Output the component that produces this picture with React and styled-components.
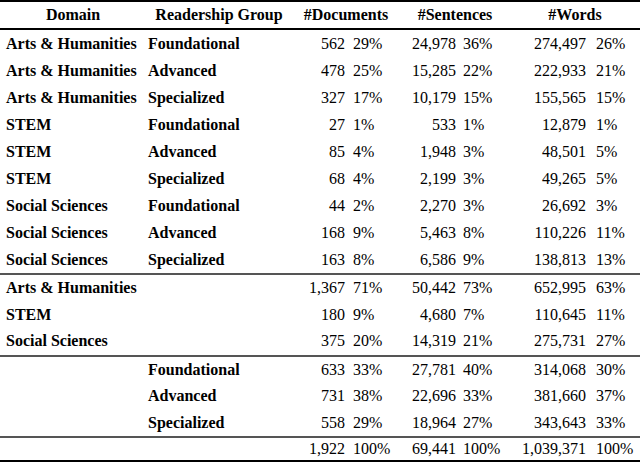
import React from "react";
import styled, { createGlobalStyle } from "styled-components";

const GlobalStyle = createGlobalStyle`
  html, body {
    margin: 0;
    padding: 0;
    background: #fff;
  }
  body {
    font-family: "Liberation Serif", "Times New Roman", serif;
    color: #000;
  }
`;

const Table = styled.div`
  width: 640px;
  border-top: 2px solid #000;
  border-bottom: 2px solid #000;
  font-size: 16px;
`;

const Group = styled.div`
  border-bottom: ${(p) => (p.$thick ? "2px solid #000" : p.$last ? "none" : "2px solid #555")};
`;

const Row = styled.div`
  display: grid;
  grid-template-columns: 146px 146px 55px 53px 58px 52px 80px 50px;
  height: ${(p) => p.$h}px;
  align-items: center;
  white-space: nowrap;
`;

const Head = styled.div`
  grid-column: span ${(p) => p.$span || 1};
  text-align: center;
  font-weight: bold;
`;

const Label = styled.div`
  font-weight: bold;
  padding-left: ${(p) => p.$pad}px;
`;

const Num = styled.div`
  text-align: right;
  padding-right: ${(p) => p.$pad}px;
`;

const Pct = styled.div`
  text-align: left;
  padding-left: ${(p) => p.$pad}px;
`;

const groups = [
  [
    ["Arts & Humanities", "Foundational", "562", "29%", "24,978", "36%", "274,497", "26%"],
    ["Arts & Humanities", "Advanced", "478", "25%", "15,285", "22%", "222,933", "21%"],
    ["Arts & Humanities", "Specialized", "327", "17%", "10,179", "15%", "155,565", "15%"],
    ["STEM", "Foundational", "27", "1%", "533", "1%", "12,879", "1%"],
    ["STEM", "Advanced", "85", "4%", "1,948", "3%", "48,501", "5%"],
    ["STEM", "Specialized", "68", "4%", "2,199", "3%", "49,265", "5%"],
    ["Social Sciences", "Foundational", "44", "2%", "2,270", "3%", "26,692", "3%"],
    ["Social Sciences", "Advanced", "168", "9%", "5,463", "8%", "110,226", "11%"],
    ["Social Sciences", "Specialized", "163", "8%", "6,586", "9%", "138,813", "13%"],
  ],
  [
    ["Arts & Humanities", "", "1,367", "71%", "50,442", "73%", "652,995", "63%"],
    ["STEM", "", "180", "9%", "4,680", "7%", "110,645", "11%"],
    ["Social Sciences", "", "375", "20%", "14,319", "21%", "275,731", "27%"],
  ],
  [
    ["", "Foundational", "633", "33%", "27,781", "40%", "314,068", "30%"],
    ["", "Advanced", "731", "38%", "22,696", "33%", "381,660", "37%"],
    ["", "Specialized", "558", "29%", "18,964", "27%", "343,643", "33%"],
  ],
  [["", "", "1,922", "100%", "69,441", "100%", "1,039,371", "100%"]],
];

const rowHeights = [27, 26.5, 26.5, 22];

const DataRow = ({ cells, h }) => (
  <Row $h={h}>
    <Label $pad={6}>{cells[0]}</Label>
    <Label $pad={2}>{cells[1]}</Label>
    <Num $pad={2}>{cells[2]}</Num>
    <Pct $pad={6}>{cells[3]}</Pct>
    <Num $pad={2}>{cells[4]}</Num>
    <Pct $pad={5}>{cells[5]}</Pct>
    <Num $pad={4}>{cells[6]}</Num>
    <Pct $pad={6}>{cells[7]}</Pct>
  </Row>
);

const App = () => (
  <>
    <GlobalStyle />
    <Table>
      <Group $thick>
        <Row $h={26}>
          <Head>Domain</Head>
          <Head>Readership Group</Head>
          <Head $span={2}>#Documents</Head>
          <Head $span={2}>#Sentences</Head>
          <Head $span={2}>#Words</Head>
        </Row>
      </Group>
      {groups.map((rows, gi) => (
        <Group key={gi} $last={gi === groups.length - 1}>
          {rows.map((cells, ri) => (
            <DataRow key={ri} cells={cells} h={rowHeights[gi]} />
          ))}
        </Group>
      ))}
    </Table>
  </>
);

export default App;
